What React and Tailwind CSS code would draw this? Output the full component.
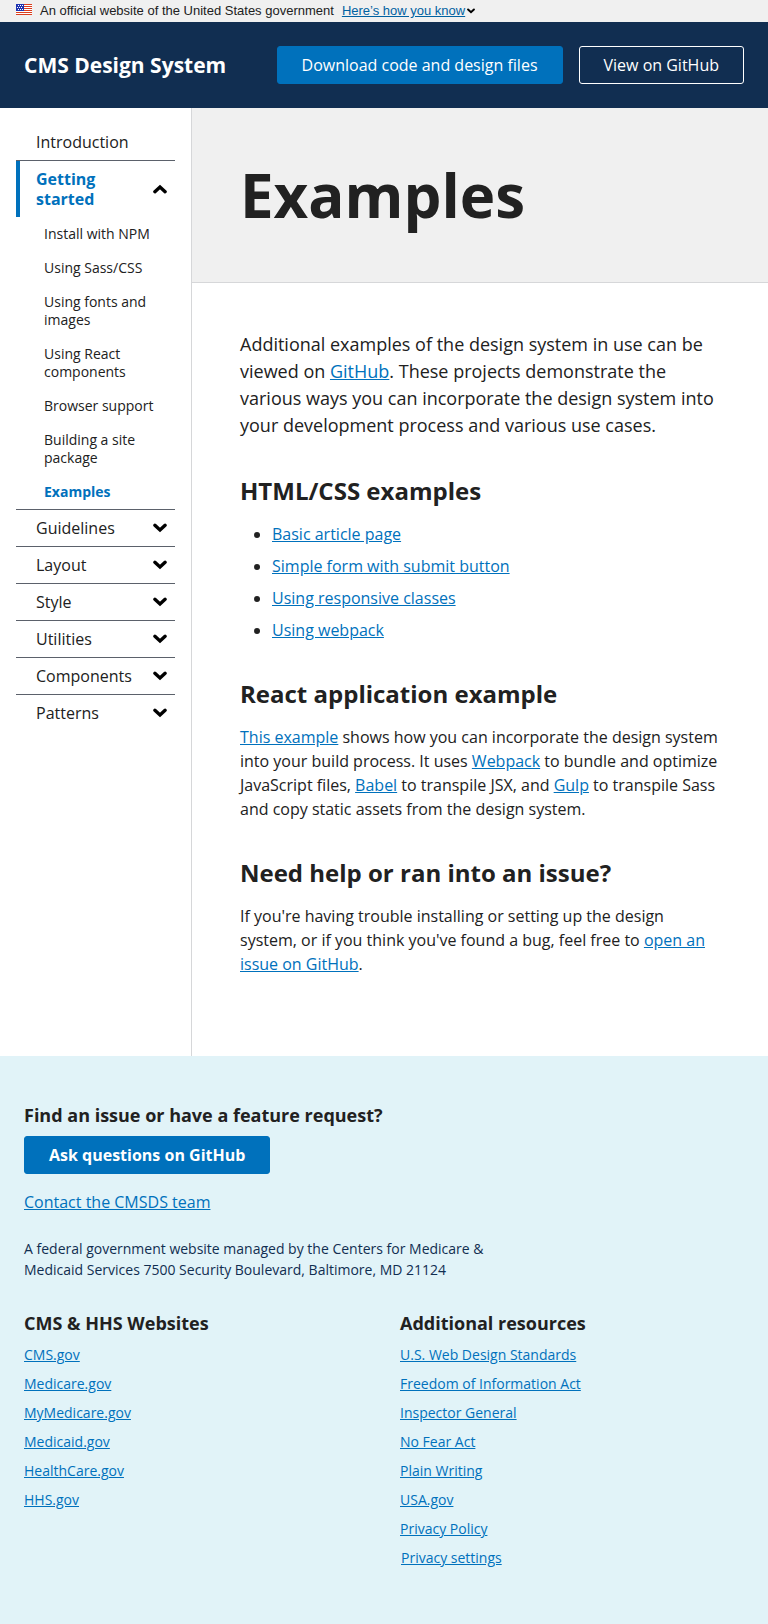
const linkClass = 'text-[#0071bc] underline';

function Chevron({ up = false, className = '' }) {
  return (
    <svg
      viewBox="0 0 14 10"
      aria-hidden="true"
      fill="none"
      stroke="#000"
      strokeWidth="3.4"
      strokeLinecap="round"
      strokeLinejoin="miter"
      className={`shrink-0 ${className} ${up ? 'rotate-180' : ''}`}
    >
      <path d="M1.9 2.3 7 7l5.100-4.700" />
    </svg>
  );
}

function Flag() {
  return (
    <svg viewBox="0 0 16 11" aria-hidden="true" className="mt-1 h-[11px] w-4 shrink-0 self-start" shapeRendering="crispEdges">
      <rect width="16" height="11" fill="#fff" />
      {[0, 2, 4, 6, 8, 10].map((y) => (
        <rect key={y} y={y} width="16" height="1" fill="#db3e1f" />
      ))}
      <rect width="8" height="7" fill="#1e33b1" />
      {[[2, 1], [4, 1], [6, 1], [1, 3], [3, 3], [5, 3], [2, 5], [4, 5], [6, 5]].map(([x, y]) => (
        <rect key={`${x}-${y}`} x={x} y={y} width="1" height="1" fill="#fff" />
      ))}
    </svg>
  );
}

const subItems = [
  'Install with NPM',
  'Using Sass/CSS',
  'Using fonts and images',
  'Using React components',
  'Browser support',
  'Building a site package',
];

const sections = ['Guidelines', 'Layout', 'Style', 'Utilities', 'Components', 'Patterns'];

const exampleLinks = [
  'Basic article page',
  'Simple form with submit button',
  'Using responsive classes',
  'Using webpack',
];

const cmsLinks = ['CMS.gov', 'Medicare.gov', 'MyMedicare.gov', 'Medicaid.gov', 'HealthCare.gov', 'HHS.gov'];

const resourceLinks = [
  'U.S. Web Design Standards',
  'Freedom of Information Act',
  'Inspector General',
  'No Fear Act',
  'Plain Writing',
  'USA.gov',
  'Privacy Policy',
];

function Link({ children, className = '' }) {
  return (
    <a href="#" className={`${linkClass} ${className}`}>
      {children}
    </a>
  );
}

function Banner() {
  return (
    <div className="flex h-[22px] items-center bg-[#f0f0f0] px-4 font-['Liberation_Sans',sans-serif] text-[13px] leading-4">
      <Flag />
      <p className="ml-2">An official website of the United States government</p>
      <button type="button" className="ml-2 flex items-center gap-[2px] text-[#0061a1]">
        <span className="underline">Here’s how you know</span>
        <Chevron className="h-[6px] w-2" />
      </button>
    </div>
  );
}

function Header() {
  return (
    <header className="flex flex-wrap items-center justify-between gap-4 bg-[#112e51] p-6 text-white">
      <a href="#" className="text-[21px] leading-7 font-bold">
        CMS Design System
      </a>
      <div className="flex gap-4">
        <a href="#" className="rounded-[3px] border border-[#0071bc] bg-[#0071bc] px-6 py-2 leading-5">
          Download code and design files
        </a>
        <a href="#" className="rounded-[3px] border border-white px-6 py-2 leading-5">
          View on GitHub
        </a>
      </div>
    </header>
  );
}

function SideNav() {
  return (
    <nav aria-label="Design system" className="w-48 shrink-0 border-r border-[#d6d7d9] p-4 leading-5">
      <ul>
        <li>
          <a href="#" className="block py-2 pl-5">
            Introduction
          </a>
        </li>
        <li className="border-t border-[#5b616b]">
          <button
            type="button"
            aria-expanded="true"
            className="flex w-full items-center justify-between border-l-4 border-[#0071bc] py-2 pr-2 pl-4 text-left font-bold text-[#0071bc]"
          >
            <span className="flex-1">Getting started</span>
            <Chevron up className="h-[10px] w-[14px]" />
          </button>
          <ul className="text-sm leading-[18px]">
            {subItems.map((item) => (
              <li key={item}>
                <a href="#" className="block py-2 pr-2 pl-7">
                  {item}
                </a>
              </li>
            ))}
            <li>
              <a href="#" aria-current="page" className="block py-2 pr-2 pl-7 font-bold text-[#0071bc]">
                Examples
              </a>
            </li>
          </ul>
        </li>
        {sections.map((item) => (
          <li key={item} className="border-t border-[#5b616b]">
            <button
              type="button"
              aria-expanded="false"
              className="flex w-full items-center justify-between py-2 pr-2 pl-5 text-left"
            >
              {item}
              <Chevron className="h-[10px] w-[14px]" />
            </button>
          </li>
        ))}
      </ul>
    </nav>
  );
}

function Section({ title, children }) {
  return (
    <section className="mt-9">
      <h2 className="mb-4 text-2xl leading-[31px] font-bold">{title}</h2>
      {children}
    </section>
  );
}

function Main() {
  return (
    <main className="min-w-0 flex-1">
      <div className="border-b border-[#d6d7d9] bg-[#f0f0f0] p-12">
        <h1 className="text-[60px] leading-[78px] font-bold">Examples</h1>
      </div>
      <div className="px-12 pt-12 pb-20">
        <p className="text-lg leading-[27px]">
          Additional examples of the design system in use can be viewed on <Link>GitHub</Link>. These projects
          demonstrate the various ways you can incorporate the design system into your development process and
          various use cases.
        </p>
        <Section title="HTML/CSS examples">
          <ul className="list-disc space-y-2 pl-8">
            {exampleLinks.map((item) => (
              <li key={item}>
                <Link>{item}</Link>
              </li>
            ))}
          </ul>
        </Section>
        <Section title="React application example">
          <p>
            <Link>This example</Link> shows how you can incorporate the design system into your build process. It
            uses <Link>Webpack</Link> to bundle and optimize JavaScript files, <Link>Babel</Link> to transpile JSX,
            and <Link>Gulp</Link> to transpile Sass and copy static assets from the design system.
          </p>
        </Section>
        <Section title="Need help or ran into an issue?">
          <p>
            If you're having trouble installing or setting up the design system, or if you think you've found a
            bug, feel free to <Link>open an issue on GitHub</Link>.
          </p>
        </Section>
      </div>
    </main>
  );
}

function FooterHeading({ children }) {
  return <h2 className="pb-[10px] text-lg leading-[22px] font-bold">{children}</h2>;
}

function Footer() {
  return (
    <footer className="bg-[#e1f3f8] px-6 pt-12 pb-14">
      <FooterHeading>Find an issue or have a feature request?</FooterHeading>
      <a
        href="#"
        className="inline-block rounded-[3px] border border-[#0071bc] bg-[#0071bc] px-6 py-2 align-top leading-5 font-bold text-white"
      >
        Ask questions on GitHub
      </a>
      <p className="mt-4">
        <Link>Contact the CMSDS team</Link>
      </p>
      <p className="mt-6 max-w-[480px] text-sm leading-[21px] text-[#112e51]">
        A federal government website managed by the Centers for Medicare &amp; Medicaid Services 7500 Security
        Boulevard, Baltimore, MD 21124
      </p>
      <div className="mt-8 grid grid-cols-2 gap-8">
        <div>
          <FooterHeading>CMS &amp; HHS Websites</FooterHeading>
          <ul className="space-y-2 text-sm leading-[21px]">
            {cmsLinks.map((item) => (
              <li key={item}>
                <Link>{item}</Link>
              </li>
            ))}
          </ul>
        </div>
        <div>
          <FooterHeading>Additional resources</FooterHeading>
          <ul className="space-y-2 text-sm leading-[21px]">
            {resourceLinks.map((item) => (
              <li key={item}>
                <Link>{item}</Link>
              </li>
            ))}
            <li>
              <button type="button" className="block px-px text-[#0071bc] underline">
                Privacy settings
              </button>
            </li>
          </ul>
        </div>
      </div>
    </footer>
  );
}

export default function App() {
  return (
    <div className="bg-white font-['Open_Sans',sans-serif] text-base leading-6 text-[#212121]">
      <Banner />
      <Header />
      <div className="flex">
        <SideNav />
        <Main />
      </div>
      <Footer />
    </div>
  );
}
